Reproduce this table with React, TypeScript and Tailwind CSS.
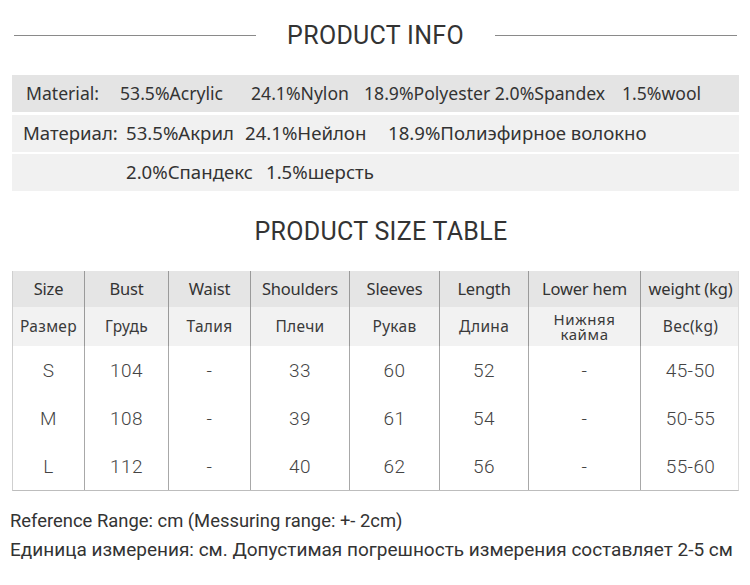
import React from "react";

const cols = [
  { en: "Size", ru: "Размер" },
  { en: "Bust", ru: "Грудь" },
  { en: "Waist", ru: "Талия" },
  { en: "Shoulders", ru: "Плечи" },
  { en: "Sleeves", ru: "Рукав" },
  { en: "Length", ru: "Длина" },
  { en: "Lower hem", ru: "Нижняя\nкайма" },
  { en: "weight (kg)", ru: "Bec(kg)" },
];

const rows = [
  ["S", "104", "-", "33", "60", "52", "-", "45-50"],
  ["M", "108", "-", "39", "61", "54", "-", "50-55"],
  ["L", "112", "-", "40", "62", "56", "-", "55-60"],
];

const gridCols = "grid grid-cols-[71px_84px_82px_99px_90px_89px_112px_100px]";

function Title({ children }: { children: string }) {
  return (
    <div className="text-[25px] text-[#333] tracking-[0.3px] font-['Roboto',sans-serif] leading-none">
      {children}
    </div>
  );
}

export default function App() {
  return (
    <div className="w-[750px] h-[585px] bg-white overflow-hidden font-['Noto_Sans',sans-serif] text-[#333]">
      {/* product info heading */}
      <div className="mt-[20px] h-[30px] flex items-center pl-[14px] pr-[13px]">
        <div className="flex-1 h-px bg-[#8a8a8a]" />
        <div className="mx-[31px]">
          <Title>PRODUCT INFO</Title>
        </div>
        <div className="flex-1 h-px bg-[#8a8a8a]" />
      </div>

      {/* material rows */}
      <div className="mt-[25px] ml-[12px] mr-[11px] flex flex-col leading-none">
        <div className="h-[37px] bg-[#e4e4e4] flex items-center pl-[14px] text-[17.6px]">
          <span className="w-[94px]">Material:</span>
          <span className="w-[131px]">53.5%Acrylic</span>
          <span className="w-[113px]">24.1%Nylon</span>
          <span className="w-[258px]">18.9%Polyester 2.0%Spandex</span>
          <span>1.5%wool</span>
        </div>
        <div className="mt-[3px] h-[37px] bg-[#f1f1f1] flex items-center pl-[11px] text-[18.6px]">
          <span className="w-[103px]">Материал:</span>
          <span className="w-[119px]">53.5%Акрил</span>
          <span className="w-[143px]">24.1%Нейлон</span>
          <span>18.9%Полиэфирное волокно</span>
        </div>
        <div className="mt-[2px] h-[37px] bg-[#f1f1f1] flex items-center pl-[114px] text-[18.6px]">
          <span className="w-[140px]">2.0%Спандекс</span>
          <span>1.5%шерсть</span>
        </div>
      </div>

      {/* size table heading */}
      <div className="h-[80px] flex items-center justify-center pl-[12px]">
        <Title>PRODUCT SIZE TABLE</Title>
      </div>

      {/* size table */}
      <div className="ml-[12px] mr-[11px] border-l border-l-[#cfcfcf] border-r border-r-[#dcdcdc] border-b border-b-[#bdbdbd]">
        <div className={`${gridCols} h-[36px] bg-[#e5e5e5] text-[16.5px] tracking-[-0.2px]`}>
          {cols.map((c, i) => (
            <div
              key={c.en}
              className={`flex items-center justify-center ${i > 0 ? "border-l border-[#9a9a9a]" : ""}`}
            >
              {c.en}
            </div>
          ))}
        </div>
        <div className={`${gridCols} h-[39px] bg-[#f2f2f2] text-[15.5px] text-[#3a3a3a]`}>
          {cols.map((c, i) => (
            <div
              key={c.ru}
              className={`flex items-center justify-center text-center whitespace-pre-line ${
                c.ru.includes("\n") ? "leading-[15px] text-[15px] tracking-[0.6px]" : "tracking-[0.3px]"
              } ${i > 0 ? "border-l border-[#9a9a9a]" : ""}`}
            >
              {c.ru}
            </div>
          ))}
        </div>
        {rows.map((r) => (
          <div
            key={r[0]}
            className={`${gridCols} h-[48px] text-[19px] tracking-[0.4px] font-light text-[#444] font-['Roboto',sans-serif]`}
          >
            {r.map((v, i) => (
              <div
                key={i}
                className={`flex items-center justify-center pt-[3px] ${i > 0 ? "border-l border-[#a8a8a8]" : ""}`}
              >
                {v}
              </div>
            ))}
          </div>
        ))}
      </div>

      {/* notes */}
      <div className="mt-[16px] pl-[10px] font-['Roboto',sans-serif] text-[#333]">
        <div className="text-[18.4px] leading-[28px]">Reference Range: cm (Messuring range: +- 2cm)</div>
        <div className="text-[19px] leading-[30px]">
          Единица измерения: см. Допустимая погрешность измерения составляет 2-5 см
        </div>
      </div>
    </div>
  );
}
